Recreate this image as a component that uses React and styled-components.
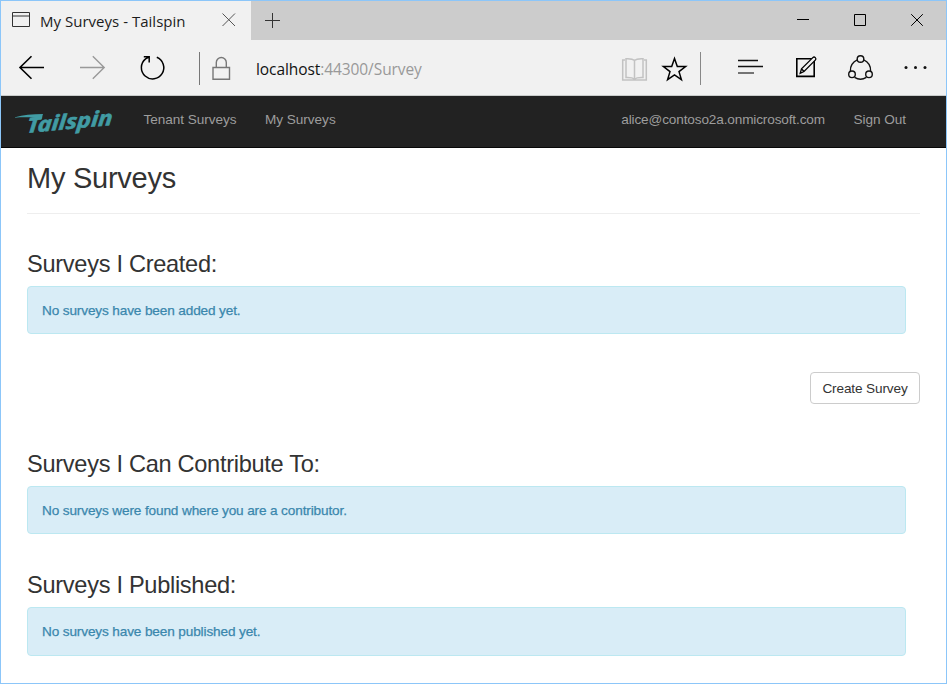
import React from "react";
import styled, { createGlobalStyle } from "styled-components";

const GlobalStyle = createGlobalStyle`
  * { box-sizing: border-box; }
  body { margin: 0; background: #fff; font-family: "Liberation Sans", Arial, sans-serif; }
`;

const Window = styled.div`
  width: 947px;
  height: 684px;
  border: 1px solid #8cc6f9;
  background: #fff;
  overflow: hidden;
`;

const TitleBar = styled.div`
  display: flex;
  height: 39px;
  background: #ccc;
`;

const Tab = styled.div`
  display: flex;
  width: 250px;
  background: #f1f1f1;
`;

const TabTitle = styled.span`
  width: 171px;
  padding-top: 1px;
  font: 15px/39px "Open Sans", "Noto Sans", sans-serif;
  letter-spacing: 0.02px;
  color: #1c1c1c;
  white-space: nowrap;
`;

const WindowControls = styled.div`
  display: flex;
  margin-left: auto;
`;

const Toolbar = styled.div`
  display: flex;
  height: 55px;
  background: #f1f1f1;
`;

const Address = styled.div`
  width: 366px;
  padding: 2px 0 0 1px;
  font: 15.5px/55px "Open Sans", "Noto Sans", sans-serif;
  letter-spacing: -0.08px;
  color: #111;
  white-space: nowrap;
`;

const AddressRest = styled.span`
  color: #999;
`;

const Glyph = styled.svg`
  display: block;
  flex: none;
  fill: none;
  stroke: ${(p) => p.$color || "#111"};
  stroke-width: ${(p) => p.$weight || 1};
`;

const Navbar = styled.nav`
  display: flex;
  height: 53px;
  padding-right: 40px;
  background: #222;
  border-top: 1px solid #c9cccb;
  border-bottom: 1px solid #080808;
`;

const NavLinks = styled.div`
  display: flex;
  gap: 28.5px;
  margin-left: ${(p) => (p.$right ? "auto" : "28.4px")};
`;

const NavLink = styled.a`
  font-size: 13.6px;
  line-height: 47px;
  letter-spacing: ${(p) => p.$spacing || "-0.04px"};
  color: #9d9d9d;
  white-space: nowrap;
`;

const Logo = styled.svg`
  display: block;
  flex: none;
`;

const Content = styled.main`
  padding: 0 26px;
`;

const PageTitle = styled.h1`
  height: 66px;
  margin: 0;
  border-bottom: 1px solid #eee;
  font-size: 29px;
  font-weight: 400;
  line-height: 60px;
  letter-spacing: -0.25px;
  color: #333;
`;

const Section = styled.section`
  margin-top: ${(p) => p.$top}px;
  padding-right: 14px;
`;

const SectionTitle = styled.h3`
  margin: 0 0 9px;
  font-size: 23.6px;
  font-weight: 400;
  line-height: 25px;
  letter-spacing: -0.3px;
  color: #333;
`;

const Alert = styled.div`
  height: ${(p) => p.$height || 48}px;
  padding: 0 14px;
  border: 1px solid #bce8f1;
  border-radius: 4px;
  background: #d9edf7;
  font-size: 13.6px;
  line-height: 47px;
  letter-spacing: -0.13px;
  color: #3a87ad;
  -webkit-text-stroke: 0.25px #3a87ad;
`;

const Actions = styled.div`
  display: flex;
  justify-content: flex-end;
  margin-top: 38px;
`;

const Button = styled.button`
  width: 110px;
  height: 32px;
  padding: 1px 0 0;
  border: 1px solid #ccc;
  border-radius: 4px;
  background: #fff;
  font: 13.6px/30px "Liberation Sans", Arial, sans-serif;
  letter-spacing: -0.13px;
  color: #333;
`;

// Each icon draws in window coordinates; x and w select its slice of the bar.
const TitleIcon = ({ x, w, children, ...rest }) => (
  <Glyph width={w} height="39" viewBox={`${x} 1 ${w} 39`} {...rest}>{children}</Glyph>
);
const ToolIcon = ({ x, w, children, ...rest }) => (
  <Glyph width={w} height="55" viewBox={`${x} 40 ${w} 55`} {...rest}>{children}</Glyph>
);

export default function App() {
  return (
    <>
      <GlobalStyle />
      <Window>
        <TitleBar>
          <Tab>
            <TitleIcon x={1} w={39} $color="#333">
              <path d="M12.5 12.5h17v14h-17zM12.5 16h17" />
            </TitleIcon>
            <TabTitle>My Surveys - Tailspin</TabTitle>
            <TitleIcon x={211} w={40} $color="#555">
              <path d="M222.5 13.5l12.5 12.5M235 13.5l-12.5 12.5" />
            </TitleIcon>
          </Tab>
          <TitleIcon x={251} w={42} $color="#333">
            <path d="M265 20.5h15M272.5 13v15" />
          </TitleIcon>
          <WindowControls>
            <TitleIcon x={780} w={46} $color="#000"><path d="M797 19.5h12" /></TitleIcon>
            <TitleIcon x={826} w={60} $color="#000"><path d="M854.5 14.5h11v11h-11z" /></TitleIcon>
            <TitleIcon x={886} w={60} $color="#000"><path d="M911.2 14.2l11.6 11.6M922.8 14.2l-11.6 11.6" /></TitleIcon>
          </WindowControls>
        </TitleBar>

        <Toolbar>
          <ToolIcon x={1} w={60} $color="#000" $weight={1.6}>
            <path d="M44 67.5H20M31.5 56.3L20 67.5l11.5 11.2" />
          </ToolIcon>
          <ToolIcon x={61} w={60} $color="#999" $weight={1.4}>
            <path d="M80 67.5h24M92.8 56.3l11.4 11.2-11.4 11.2" />
          </ToolIcon>
          <ToolIcon x={121} w={60} $color="#000" $weight={1.5}>
            <path d="M156.8 57.3a11.2 11.2 0 1 1-11.2 1.6L149 57M143.8 56.8h5.4v5.7" />
          </ToolIcon>
          <ToolIcon x={181} w={74} $color="#777">
            <path d="M199.5 52v33" />
            <path strokeWidth="1.4" d="M213 67.5h16.5v11.8H213zM216.3 67.5v-5a5 5 0 0 1 10 0v5" />
          </ToolIcon>
          <Address>localhost<AddressRest>:44300/Survey</AddressRest></Address>
          <ToolIcon x={621} w={33} $color="#c2c2c2" $weight={1.5}>
            <path d="M625 60h-2.3v20h23.6V60H644M634.5 60.5c-2-2-5-2-8.5-1.8v18.8c4-.2 6.5 0 8.5 1.5c2-1.5 4.5-1.7 8.5-1.5V58.7c-3.5-.2-6.5-.2-8.5 1.8zv19" />
          </ToolIcon>
          <ToolIcon x={654} w={34} $color="#000" $weight={1.5}>
            <path d="M674.5 58.5l2.8 8h8.3l-6.6 5.1 2.4 8-6.9-4.8-6.9 4.8 2.4-8-6.6-5.1h8.3z" />
          </ToolIcon>
          <ToolIcon x={688} w={32} $color="#888"><path d="M700.5 52v33" /></ToolIcon>
          <ToolIcon x={720} w={60} $color="#111" $weight={1.4}>
            <path d="M738 60.5h20M738 66.5h25" /><path stroke="#555" strokeWidth="1.6" d="M738 73h16" />
          </ToolIcon>
          <ToolIcon x={780} w={54} $color="#000" $weight={1.6}>
            <path d="M796.8 58.8h17.4v17.6h-17.4z" />
            <path fill="#f1f1f1" strokeWidth="1.3" d="M800.2 73.3l1.3-4.5L812.8 57.6a1.7 1.7 0 0 1 2.5 2.5L804 71.5zM801.5 68.8l2.5 2.7" />
          </ToolIcon>
          <ToolIcon x={834} w={54} $color="#111" $weight={1.4}>
            <circle cx="860.5" cy="59" r="3.3" /><circle cx="852" cy="74.3" r="3.3" /><circle cx="869" cy="74.3" r="3.3" />
            <path d="M857.3 59.8a11 11 0 0 0-6.9 11.300M863.700 59.800a11 11 0 0 1 6.900 11.300M854.600 77.400a11 11 0 0 0 11.800 0" />
          </ToolIcon>
          <ToolIcon x={888} w={58} $color="none">
            <g fill="#111"><circle cx="906" cy="67.5" r="1.5" /><circle cx="915.5" cy="67.5" r="1.5" /><circle cx="925" cy="67.5" r="1.5" /></g>
          </ToolIcon>
        </Toolbar>

        <Navbar>
          <Logo width="114" height="51" viewBox="1 96 114 51">
            <path fill="#419ca4" d="M15 117.3c8-2.4 17-3.200 28-3.200l-1.500 5c-7-1.800-17-2.200-26.500-1.300z" />
            <text transform="translate(26.500 133) rotate(-5.5) skewX(-10)" textLength="86" lengthAdjust="spacingAndGlyphs" fill="#419ca4" stroke="#419ca4" strokeWidth=".6" fontFamily="Noto Sans, Open Sans, sans-serif" fontSize="20.5" fontWeight="700" fontStyle="italic">Tailspin</text>
          </Logo>
          <NavLinks>
            <NavLink>Tenant Surveys</NavLink>
            <NavLink>My Surveys</NavLink>
          </NavLinks>
          <NavLinks $right>
            <NavLink $spacing="-0.14px">alice@contoso2a.onmicrosoft.com</NavLink>
            <NavLink>Sign Out</NavLink>
          </NavLinks>
        </Navbar>

        <Content>
          <PageTitle>My Surveys</PageTitle>
          <Section $top={38}>
            <SectionTitle>Surveys I Created:</SectionTitle>
            <Alert>No surveys have been added yet.</Alert>
          </Section>
          <Actions><Button>Create Survey</Button></Actions>
          <Section $top={48}>
            <SectionTitle>Surveys I Can Contribute To:</SectionTitle>
            <Alert>No surveys were found where you are a contributor.</Alert>
          </Section>
          <Section $top={39}>
            <SectionTitle>Surveys I Published:</SectionTitle>
            <Alert $height={49}>No surveys have been published yet.</Alert>
          </Section>
        </Content>
      </Window>
    </>
  );
}
